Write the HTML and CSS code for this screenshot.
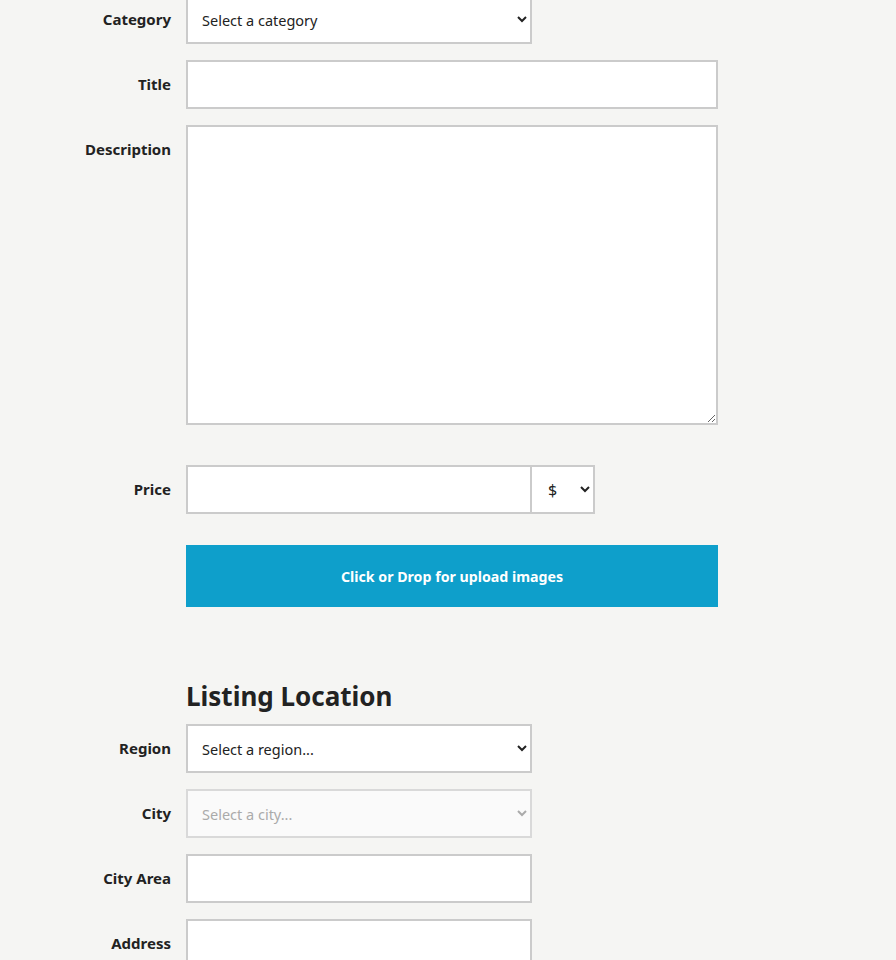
FILE: index.html
```html
<!DOCTYPE html>
<html lang="en">
<head>
<meta charset="utf-8">
<title>Listing form</title>
<link rel="stylesheet" href="styles.css">
</head>
<body>
<form class="form">
  <div class="row">
    <label class="label">Category</label>
    <div class="field"><select class="control select-md"><option>Select a category</option></select></div>
  </div>
  <div class="row">
    <label class="label">Title</label>
    <div class="field"><input class="control input-lg" type="text"></div>
  </div>
  <div class="row row-desc">
    <label class="label">Description</label>
    <div class="field"><textarea class="control textarea"></textarea></div>
  </div>
  <div class="row">
    <label class="label">Price</label>
    <div class="field price">
      <input class="control input-md price-input" type="text">
      <select class="control currency"><option>$</option></select>
    </div>
  </div>
  <div class="row">
    <span class="label"></span>
    <div class="field"><div class="upload">Click or Drop for upload images</div></div>
  </div>
  <div class="row row-heading">
    <span class="label"></span>
    <h2 class="heading">Listing Location</h2>
  </div>
  <div class="row">
    <label class="label">Region</label>
    <div class="field"><select class="control select-md"><option>Select a region...</option></select></div>
  </div>
  <div class="row">
    <label class="label">City</label>
    <div class="field"><select class="control select-md" disabled><option>Select a city...</option></select></div>
  </div>
  <div class="row">
    <label class="label">City Area</label>
    <div class="field"><input class="control input-md" type="text"></div>
  </div>
  <div class="row">
    <label class="label">Address</label>
    <div class="field"><input class="control input-md" type="text"></div>
  </div>
</form>
</body>
</html>
```

FILE: styles.css
```css
html, body {
  margin: 0;
  padding: 0;
  background: #f5f5f3;
}
body {
  font-family: "Noto Sans", "Lato", sans-serif;
  color: #222;
}
.form {
  display: flex;
  flex-direction: column;
  gap: 16px;
  margin-top: -5px;
}
.row {
  display: grid;
  grid-template-columns: 171px 532px;
  column-gap: 15px;
  align-items: start;
}
.label {
  text-align: right;
  font-weight: 700;
  font-size: 15px;
  line-height: 49px;
  color: #222;
}
.field {
  display: flex;
}
.control {
  box-sizing: border-box;
  height: 49px;
  border: 2px solid #cbcbcb;
  background: #fff;
  font-family: inherit;
  font-size: 14.5px;
  color: #222;
  border-radius: 0;
  margin: 0;
  outline: none;
}
select.control {
  padding: 0 6px 0 10px;
}
input.control {
  padding: 0 14px;
}
.select-md, .input-md {
  width: 346px;
}
.input-lg {
  width: 532px;
}
.textarea {
  width: 532px;
  height: 300px;
  resize: vertical;
  padding: 12px 14px;
  display: block;
}
.row-desc {
  margin-bottom: 24px;
}
.currency {
  width: 64px;
  margin-left: -1px;
  border-left-width: 1px;
  font-size: 16px;
}
select.currency {
  padding-left: 12px;
}
select:disabled {
  background: #fafafa;
  color: #aaa;
  border-color: #d9d9d9;
  opacity: 1;
}
.upload {
  margin-top: 15px;
  width: 532px;
  height: 62px;
  background: #0e9fcb;
  color: #fff;
  font-weight: 700;
  font-size: 14.2px;
  display: flex;
  align-items: center;
  justify-content: center;
}
.row-heading {
  margin-top: 55px;
  margin-bottom: -6px;
}
.heading {
  margin: 0;
  font-size: 26px;
  line-height: 36px;
  font-weight: 700;
  color: #222;
}
```
